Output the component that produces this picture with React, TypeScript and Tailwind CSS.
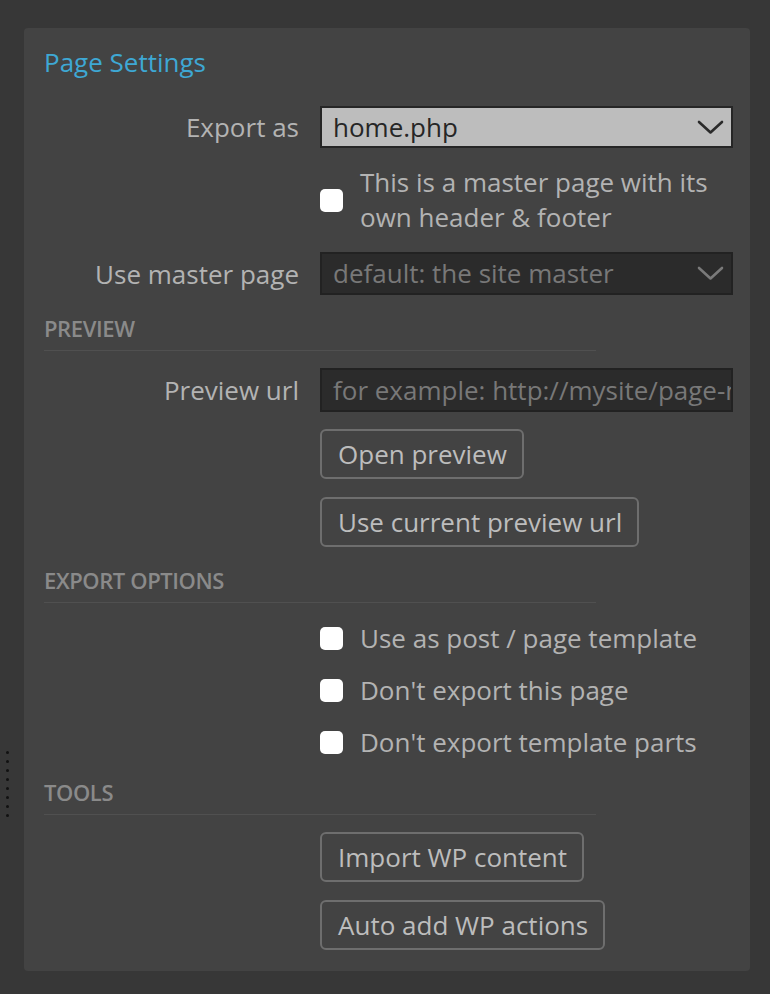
const font = { fontFamily: '"Open Sans", "Noto Sans", sans-serif' }

function Label({ children }: { children: React.ReactNode }) {
  return <div className="w-[255px] shrink-0 text-right text-[26px] leading-[34px] text-[#b3b3b3]">{children}</div>
}

function Chevron({ color }: { color: string }) {
  return (
    <svg width="27" height="15" viewBox="0 0 27 15" fill="none" className="shrink-0">
      <path d="M2 2 L13.5 12.5 L25 2" stroke={color} strokeWidth="2.6" strokeLinecap="round" strokeLinejoin="round" />
    </svg>
  )
}

function Select({ value, light, h }: { value: string; light?: boolean; h: string }) {
  return (
    <div
      className={
        "flex flex-1 items-center justify-between border-2 pl-[11px] pr-[7px] text-[26px] " +
        h +
        (light ? " border-[#262626] bg-[#bdbdbd] text-[#262626]" : " border-[#222] bg-[#2b2b2b] text-[#787878]")
      }
    >
      <span>{value}</span>
      <Chevron color={light ? "#2a2a2a" : "#7a7a7a"} />
    </div>
  )
}

function Box() {
  return <span className="h-[23px] w-[23px] shrink-0 rounded-[5px] bg-white" />
}

function Section({ title, className }: { title: string; className: string }) {
  return (
    <div className={"w-[552px] border-b border-[#505050] pb-[8px] text-[22px] font-semibold leading-[28px] tracking-[-0.4px] text-[#8a8a8a] " + className}>
      {title}
    </div>
  )
}

function Button({ children, className }: { children: React.ReactNode; className: string }) {
  return (
    <div className={"ml-[276px] flex h-[50px] w-fit items-center rounded-[6px] border-2 border-[#6e6e6e] pl-[16px] pr-[15px] text-[26px] text-[#bdbdbd] " + className}>
      {children}
    </div>
  )
}

function CheckRow({ label }: { label: string }) {
  return (
    <div className="ml-[276px] flex h-[52px] items-center gap-[17px] text-[26px] text-[#b3b3b3]">
      <Box />
      <span>{label}</span>
    </div>
  )
}

export default function App() {
  return (
    <div className="flex min-h-screen bg-[#373737]" style={font}>
      {/* resize handle */}
      <div className="flex w-[24px] shrink-0 flex-col items-center gap-[6px] pr-[9px] pt-[751px]">
        {[0, 1, 2, 3, 4, 5, 6, 7].map((i) => (
          <span key={i} className="h-[3px] w-[3px] rounded-full bg-[#111]" />
        ))}
      </div>
      <div className="mt-[28px] mb-[23px] flex w-[726px] flex-col self-start rounded-[4px] bg-[#434343] pb-[21px] pl-[20px] pr-[17px] pt-[17px]">
        <h1 className="text-[26px] leading-[34px] text-[#3ea8d4]">Page Settings</h1>

        <div className="mt-[27px] flex items-center gap-[21px]">
          <Label>Export as</Label>
          <Select value="home.php" light h="h-[42px]" />
        </div>

        <div className="ml-[276px] mt-[17px] flex items-center gap-[17px] text-[26px] leading-[35px] text-[#b3b3b3]">
          <Box />
          <span className="flex-1">This is a master page with its own header &amp; footer</span>
        </div>

        <div className="mt-[17px] flex items-center gap-[21px]">
          <Label>Use master page</Label>
          <Select value="default: the site master" h="h-[43px]" />
        </div>

        <Section title="PREVIEW" className="mt-[19px]" />

        <div className="mt-[17px] flex items-center gap-[21px]">
          <Label>Preview url</Label>
          <div className="flex h-[44px] min-w-0 flex-1 items-center overflow-hidden whitespace-nowrap border-2 border-[#222] bg-[#2b2b2b] pl-[11px] text-[26px] text-[#787878]">
            for example: http://mysite/page-name
          </div>
        </div>

        <Button className="mt-[17px]">Open preview</Button>
        <Button className="mt-[18px]">Use current preview url</Button>

        <Section title="EXPORT OPTIONS" className="mt-[19px]" />

        <div className="mt-[9px] flex flex-col">
          <CheckRow label="Use as post / page template" />
          <CheckRow label="Don't export this page" />
          <CheckRow label="Don't export template parts" />
        </div>

        <Section title="TOOLS" className="mt-[10px]" />

        <Button className="mt-[17px]">Import WP content</Button>
        <Button className="mt-[18px]">Auto add WP actions</Button>
      </div>
    </div>
  )
}
